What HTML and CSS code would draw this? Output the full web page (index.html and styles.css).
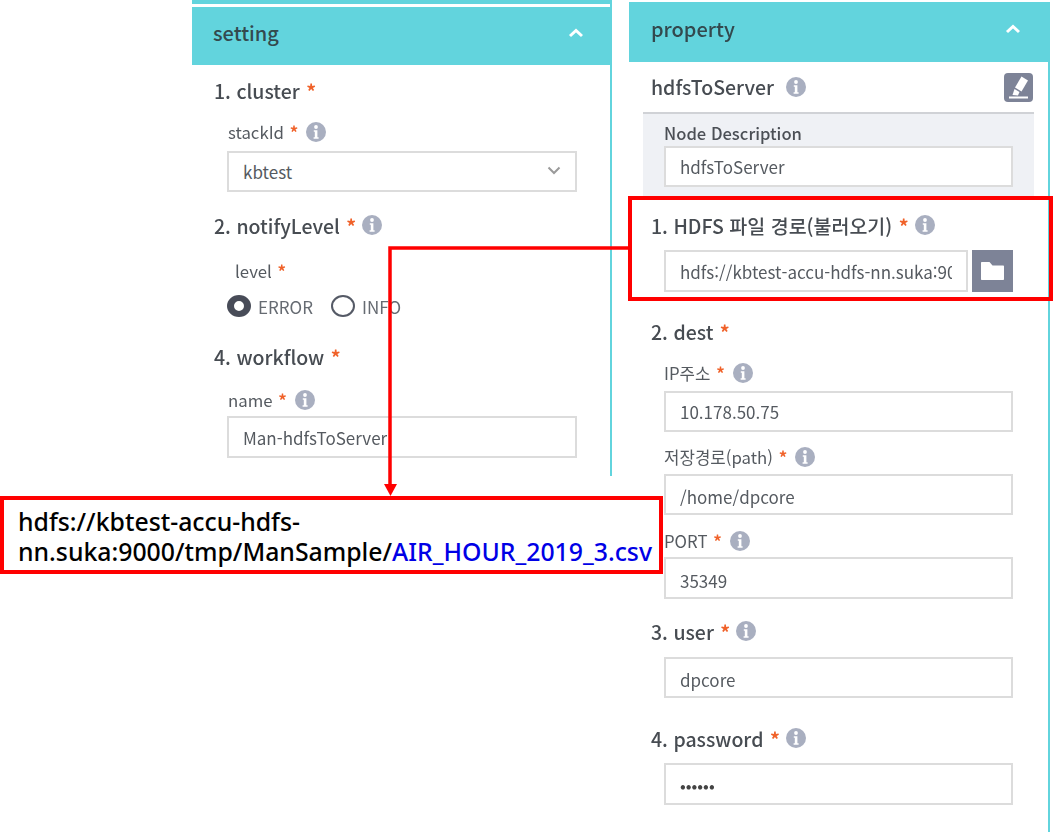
FILE: index.html
```html
<!DOCTYPE html>
<html lang="ko">
<head>
<meta charset="utf-8">
<title>hdfsToServer</title>
<link rel="stylesheet" href="styles.css">
</head>
<body>
<svg class="defs" width="0" height="0" aria-hidden="true">
  <symbol id="info" viewBox="0 0 20 20">
    <circle cx="10" cy="10" r="10" fill="#a9afc0"/>
    <circle cx="10" cy="5" r="1.9" fill="#fff"/>
    <path d="M7.8 8.2h3.6v7h1.2v1.6H7.6v-1.6h1.2v-5.4h-1z" fill="#fff"/>
  </symbol>
  <symbol id="chev" viewBox="0 0 16 10">
    <path d="M2 8l6-5.5L14 8" fill="none" stroke="#fff" stroke-width="3"/>
  </symbol>
</svg>
<div class="canvas">
  <div class="panels">
    <section class="panel setting">
      <div class="strip"></div>
      <header class="bar bar-setting"><span>setting</span><svg class="chev"><use href="#chev"/></svg></header>
      <div class="body body-setting">
        <div class="head m13">1. cluster <b>*</b></div>
        <div class="label ind m17">stackId <b>*</b> <svg class="i"><use href="#info"/></svg></div>
        <div class="field m8 select">kbtest
          <svg class="caret" viewBox="0 0 14 9"><path d="M1.5 1.5L7 7l5.500-5.500" fill="none" stroke="#9a9a9a" stroke-width="2"/></svg>
        </div>
        <div class="head m21">2. notifyLevel <b>*</b> <svg class="i"><use href="#info"/></svg></div>
        <div class="label level m21">level <b>*</b></div>
        <div class="radios m13">
          <span class="radio on"></span><span class="rlabel">ERROR</span>
          <span class="radio"></span><span class="rlabel">INFO</span>
        </div>
        <div class="head m27">4. workflow <b>*</b></div>
        <div class="label ind m19">name <b>*</b> <svg class="i"><use href="#info"/></svg></div>
        <div class="field field-tall m5">Man-hdfsToServer</div>
      </div>
    </section>
    <section class="panel property">
      <header class="bar bar-property"><span>property</span><svg class="chev"><use href="#chev"/></svg></header>
      <div class="body">
        <div class="node">
          <span class="head">hdfsToServer <svg class="i"><use href="#info"/></svg></span>
          <span class="edit">
            <svg viewBox="0 0 29 29" width="29" height="29">
              <path d="M17.500 3.500l6.500 4-6.500 11-6.500-4z" fill="#fff"/>
              <path d="M10.500 16l5 3-1.500 3.500-5.500-.5z" fill="#fff"/>
              <rect x="5" y="23.500" width="19" height="2" fill="#fff"/>
            </svg>
          </span>
        </div>
        <div class="desc">
          <div class="desc-title">Node Description</div>
          <div class="field field-p">hdfsToServer</div>
        </div>
        <div class="head pad m15">1. HDFS 파일 경로(불러오기) <b>*</b> <svg class="i"><use href="#info"/></svg></div>
        <div class="file m11">
          <div class="field field-file"><span class="clip">hdfs://kbtest-accu-hdfs-nn.suka:9000/tmp/ManSample/AIR_HOUR_2019_3.csv</span></div>
          <span class="folder">
            <svg viewBox="0 0 23 18" width="23" height="18"><path d="M0 1c0-.6.4-1 1-1h7.500l3 3.500H22c.6 0 1 .4 1 1V17c0 .6-.4 1-1 1H1c-.6 0-1-.4-1-1z" fill="#fff"/></svg>
          </span>
        </div>
        <div class="head pad m27">2. dest <b>*</b></div>
        <div class="label sub m17">IP주소 <b>*</b> <svg class="i"><use href="#info"/></svg></div>
        <div class="field field-p m7">10.178.50.75</div>
        <div class="label sub m14">저장경로(path) <b>*</b> <svg class="i"><use href="#info"/></svg></div>
        <div class="field field-p field-low m6">/home/dpcore</div>
        <div class="label sub m15">PORT <b>*</b> <svg class="i"><use href="#info"/></svg></div>
        <div class="field field-p field-tall field-low m5">35349</div>
        <div class="head pad m20">3. user <b>*</b> <svg class="i"><use href="#info"/></svg></div>
        <div class="field field-p field-low m12">dpcore</div>
        <div class="head pad m28">4. password <b>*</b> <svg class="i"><use href="#info"/></svg></div>
        <div class="field field-p field-tall m11 dots">••••••</div>
      </div>
    </section>
  </div>

  <div class="callout-path"></div>
  <svg class="connector" width="1053" height="832" aria-hidden="true">
    <path d="M628 248H390V488" fill="none" stroke="#f00" stroke-width="3.500"/>
    <path d="M384 484h13l-6.500 12z" fill="#f00"/>
  </svg>
  <div class="note">hdfs://kbtest-accu-hdfs-<br>nn.suka:9000/tmp/ManSample/<span class="file-name">AIR_HOUR_2019_3.csv</span></div>
</div>
</body>
</html>
```
FILE: styles.css
```css
* { box-sizing: border-box; }
html, body { margin: 0; padding: 0; background: #fff; }
.defs { position: absolute; }
.canvas {
  position: relative;
  width: 1053px;
  height: 832px;
  overflow: hidden;
  font-family: "Noto Sans CJK KR", "Noto Sans", sans-serif;
  font-variant-ligatures: none;
  font-feature-settings: "calt" 0, "ccmp" 0;
  color: #555;
}
.panels { display: flex; align-items: flex-start; gap: 17px; padding-left: 192px; filter: blur(0.35px); }
.panel { flex: none; }
.setting { width: 420px; height: 476px; border-right: 2px solid #62d4dd; }
.property { width: 421px; height: 832px; border-right: 2px solid #62d4dd; margin-top: 2px; }
.strip { height: 4px; margin-right: -2px; background: #62d4dd; }
.bar {
  display: flex;
  align-items: center;
  justify-content: space-between;
  margin-right: -2px;
  padding: 0 28px 7px 21px;
  background: #62d4dd;
  color: #33494e;
  font-size: 20px;
  font-weight: 500;
}
.bar-setting { height: 58px; margin-top: 3px; }
.bar-property { height: 60px; padding-left: 22px; padding-right: 29px; }
.chev { width: 16px; height: 10px; }
.body-setting { padding-left: 22px; }
.head {
  display: flex;
  align-items: center;
  gap: 1px;
  height: 26px;
  padding-bottom: 2px;
  font-size: 19.500px;
  font-weight: 500;
  color: #474c52;
  white-space: pre;
}
.head b, .label b { color: #f0622a; font-weight: 700; }
.label {
  display: flex;
  align-items: center;
  gap: 1px;
  height: 22px;
  font-size: 16.800px;
  color: #555a60;
  white-space: pre;
}
.i { width: 20px; height: 20px; flex: none; margin-left: 5px; }
.label .i { margin-left: 7px; }
.ind { margin-left: 14px; }
.level { margin-left: 21px; }
.sub { margin-left: 35px; }
.pad { margin-left: 22px; }
.field {
  display: flex;
  align-items: center;
  width: 350px;
  height: 41px;
  margin-left: 13px;
  padding: 0 0 0 14px;
  border: 2px solid #dcdcdc;
  background: #fff;
  font-size: 17px;
  color: #555a60;
}
.field-tall { height: 42px; }
.field-low { padding-top: 4px; }
.select { position: relative; }
.caret { position: absolute; right: 14px; top: 13px; width: 14px; height: 9px; }
.field-p { width: 349px; margin-left: 35px; }
.radios { display: flex; align-items: center; height: 22px; gap: 7px; margin-left: 13px; }
.radio {
  width: 24px;
  height: 22px;
  border: 2px solid #555a66;
  border-radius: 50%;
  background: #fff;
}
.radio.on { border-width: 6px 7px; border-color: #484c58; }
.rlabel { font-size: 17px; color: #666b72; margin-right: 11px; }
.node {
  display: flex;
  align-items: center;
  justify-content: space-between;
  height: 29px;
  margin: 11px 15px 0 22px;
}
.edit {
  display: block;
  width: 29px;
  height: 29px;
  border-radius: 4px;
  background: #7d8397;
}
.edit svg { display: block; }
.desc {
  width: 391px;
  height: 86px;
  margin: 10px 0 0 14px;
  padding-top: 8px;
  border-top: 2px solid #d0d2d6;
  background: #eff1f5;
}
.desc-title {
  height: 22px;
  margin-left: 21px;
  font-size: 16.600px;
  font-weight: 500;
  line-height: 22px;
  color: #4b4f55;
}
.desc .field { margin-left: 21px; margin-top: 2px; }
.file { display: flex; gap: 4px; margin-left: 35px; height: 42px; }
.field-file { width: 304px; height: 42px; margin-left: 0; padding-right: 14px; }
.clip { display: block; overflow: hidden; white-space: nowrap; }
.folder {
  display: flex;
  align-items: center;
  justify-content: center;
  width: 41px;
  height: 42px;
  background: #7d8397;
}
.dots { color: #444; letter-spacing: 0; }
.m5 { margin-top: 5px; }
.m6 { margin-top: 6px; }
.m7 { margin-top: 7px; }
.m8 { margin-top: 8px; }
.m11 { margin-top: 11px; }
.m12 { margin-top: 12px; }
.m13 { margin-top: 13px; }
.m14 { margin-top: 14px; }
.m15 { margin-top: 15px; }
.m17 { margin-top: 17px; }
.m19 { margin-top: 19px; }
.m20 { margin-top: 20px; }
.m21 { margin-top: 21px; }
.m27 { margin-top: 27px; }
.m28 { margin-top: 28px; }
.callout-path {
  position: absolute;
  left: 628px;
  top: 196px;
  width: 425px;
  height: 105px;
  border: 4px solid #f00;
}
.connector { position: absolute; left: 0; top: 0; pointer-events: none; }
.note {
  position: absolute;
  left: 0;
  top: 496px;
  width: 663px;
  height: 78px;
  padding: 6px 0 0 14px;
  border: 4px solid #f00;
  background: #fff;
  font-family: "Noto Sans", sans-serif;
  font-size: 24.800px;
  font-weight: 500;
  line-height: 30px;
  color: #000;
  white-space: nowrap;
}
.file-name { color: #0000e6; }
```
